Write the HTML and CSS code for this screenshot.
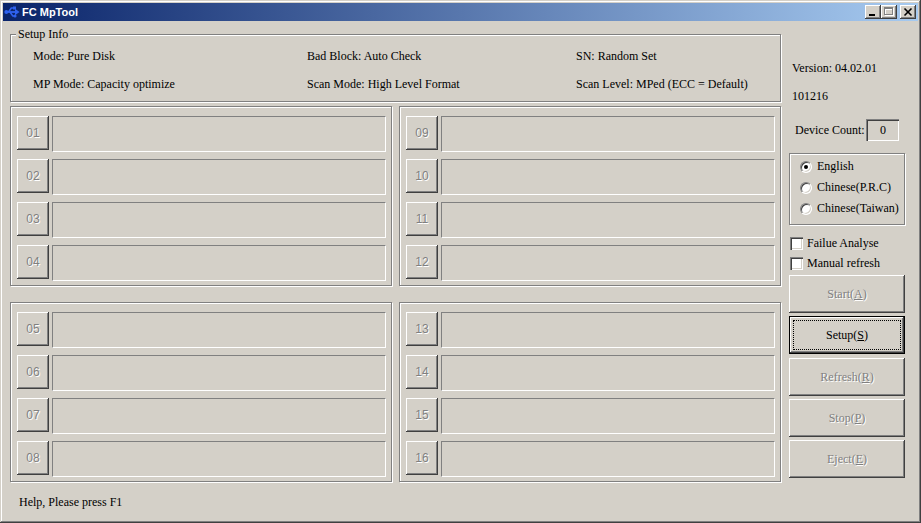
FILE: index.html
```html
<!DOCTYPE html>
<html>
<head>
<meta charset="utf-8">
<title>FC MpTool</title>
<link rel="stylesheet" href="styles.css">
</head>
<body>
<div class="window">
  <div class="titlebar">
    <svg class="app-icon" width="16" height="16" viewBox="0 0 16 16">
      <g fill="#2f62f0" stroke="#2f62f0">
        <circle cx="2.3" cy="8" r="2" stroke="none"/>
        <line x1="2" y1="8" x2="12" y2="8" stroke-width="1.8"/>
        <polygon points="11,4.8 15.5,8 11,11.2" stroke="none"/>
        <polyline points="4.5,8 7.3,4 9.5,4" fill="none" stroke-width="1.6"/>
        <rect x="9" y="2.5" width="3" height="3" stroke="none"/>
        <polyline points="6,8 8.8,12 10,12" fill="none" stroke-width="1.6"/>
        <circle cx="11" cy="12" r="1.6" stroke="none"/>
      </g>
    </svg>
    <span class="title">FC MpTool</span>
    <div class="caption-btns">
      <div class="cap">
        <svg width="16" height="14" viewBox="0 0 16 14" shape-rendering="crispEdges"><rect x="4" y="9" width="6" height="2" fill="#000"/></svg>
      </div>
      <div class="cap">
        <svg width="16" height="14" viewBox="0 0 16 14" shape-rendering="crispEdges">
          <g fill="none" stroke="#fff"><rect x="4.5" y="3.5" width="8" height="7"/><line x1="4" y1="4.5" x2="13" y2="4.5"/></g>
          <g fill="none" stroke="#808080"><rect x="3.5" y="2.5" width="8" height="7"/><line x1="3" y1="3.5" x2="12" y2="3.5"/></g>
        </svg>
      </div>
      <div class="cap cap-close">
        <svg width="16" height="14" viewBox="0 0 16 14"><g stroke="#000" stroke-width="1.6"><line x1="4.5" y1="3.5" x2="11.5" y2="10.5"/><line x1="11.5" y1="3.5" x2="4.5" y2="10.5"/></g></svg>
      </div>
    </div>
  </div>

  <div class="client">
    <div class="main">
      <div class="group setup">
        <span class="group-label">Setup Info</span>
        <span>Mode: Pure Disk</span>
        <span>Bad Block: Auto Check</span>
        <span>SN: Random Set</span>
        <span>MP Mode: Capacity optimize</span>
        <span>Scan Mode: High Level Format</span>
        <span>Scan Level: MPed (ECC = Default)</span>
      </div>

      <div class="ports">
        <div class="group port-group">
          <div class="port-row"><div class="port-btn">01</div><div class="port-field"></div></div>
          <div class="port-row"><div class="port-btn">02</div><div class="port-field"></div></div>
          <div class="port-row"><div class="port-btn">03</div><div class="port-field"></div></div>
          <div class="port-row"><div class="port-btn">04</div><div class="port-field"></div></div>
        </div>
        <div class="group port-group">
          <div class="port-row"><div class="port-btn">09</div><div class="port-field"></div></div>
          <div class="port-row"><div class="port-btn">10</div><div class="port-field"></div></div>
          <div class="port-row"><div class="port-btn">11</div><div class="port-field"></div></div>
          <div class="port-row"><div class="port-btn">12</div><div class="port-field"></div></div>
        </div>
        <div class="group port-group">
          <div class="port-row"><div class="port-btn">05</div><div class="port-field"></div></div>
          <div class="port-row"><div class="port-btn">06</div><div class="port-field"></div></div>
          <div class="port-row"><div class="port-btn">07</div><div class="port-field"></div></div>
          <div class="port-row"><div class="port-btn">08</div><div class="port-field"></div></div>
        </div>
        <div class="group port-group">
          <div class="port-row"><div class="port-btn">13</div><div class="port-field"></div></div>
          <div class="port-row"><div class="port-btn">14</div><div class="port-field"></div></div>
          <div class="port-row"><div class="port-btn">15</div><div class="port-field"></div></div>
          <div class="port-row"><div class="port-btn">16</div><div class="port-field"></div></div>
        </div>
      </div>

      <div class="status">Help, Please press F1</div>
    </div>

    <div class="side">
      <div class="ver">Version: 04.02.01</div>
      <div class="ver build">101216</div>
      <div class="device-row">
        <span class="device-label">Device Count:</span>
        <span class="device-box">0</span>
      </div>
      <div class="group lang-group">
        <div class="radio-row"><span class="radio checked"></span><span>English</span></div>
        <div class="radio-row"><span class="radio"></span><span>Chinese(P.R.C)</span></div>
        <div class="radio-row"><span class="radio"></span><span>Chinese(Taiwan)</span></div>
      </div>
      <div class="checks">
        <div class="check-row"><span class="checkbox"></span><span>Failue Analyse</span></div>
        <div class="check-row"><span class="checkbox"></span><span>Manual refresh</span></div>
      </div>
      <div class="buttons">
        <div class="btn disabled">Start(<u>A</u>)</div>
        <div class="btn default">Setup(<u>S</u>)</div>
        <div class="btn disabled btn-gap">Refresh(<u>R</u>)</div>
        <div class="btn disabled">Stop(<u>P</u>)</div>
        <div class="btn disabled">Eject(<u>E</u>)</div>
      </div>
    </div>
  </div>
</div>
</body>
</html>
```

FILE: styles.css
```css
* { box-sizing: border-box; }

body {
  margin: 0;
  background: #d4d0c8;
  font-family: "Liberation Serif", "Times New Roman", serif;
  font-size: 12px;
  color: #000;
}

.window {
  width: 921px;
  height: 523px;
  padding: 3px;
  background: #d4d0c8;
  box-shadow: inset -1px -1px #404040, inset 1px 1px #d4d0c8,
              inset -2px -2px #808080, inset 2px 2px #ffffff;
  display: flex;
  flex-direction: column;
}

.titlebar {
  height: 18px;
  background: linear-gradient(to right, #0a246a, #a6caf0);
  display: flex;
  align-items: center;
  padding: 0 2px 0 1px;
}

.app-icon { display: block; }

.title {
  color: #fff;
  font-family: "Liberation Sans", Arial, sans-serif;
  font-weight: bold;
  font-size: 11px;
  margin-left: 2px;
  line-height: 18px;
}

.caption-btns {
  margin-left: auto;
  display: flex;
}

.cap {
  width: 16px;
  height: 14px;
  background: #d4d0c8;
  box-shadow: inset -1px -1px #404040, inset 1px 1px #ffffff,
              inset -2px -2px #808080, inset 2px 2px #d4d0c8;
}
.cap svg { display: block; }
.cap-close { margin-left: 3px; }

.client {
  flex: 1;
  display: flex;
  padding-left: 7px;
}

.main {
  width: 771px;
  padding-top: 13px;
}

.group {
  position: relative;
  border: 1px solid #808080;
  box-shadow: inset 1px 1px #ffffff, 1px 1px #ffffff;
}

.group-label {
  position: absolute;
  top: -8px;
  left: 5px;
  padding: 0 2px;
  background: #d4d0c8;
  line-height: 14px;
}

.setup {
  height: 68px;
  padding: 14px 0 0 22px;
  display: grid;
  grid-template-columns: 274px 269px auto;
  grid-auto-rows: 14px;
  row-gap: 14px;
  line-height: 14px;
  white-space: nowrap;
}

.ports {
  margin-top: 4px;
  display: grid;
  grid-template-columns: 382px 382px;
  column-gap: 7px;
  row-gap: 16px;
}

.port-group {
  height: 180px;
  padding: 9px 5px 0 6px;
  display: flex;
  flex-direction: column;
  gap: 7px;
}

.port-row {
  display: flex;
  gap: 3px;
  height: 36px;
}

.port-btn {
  width: 32px;
  height: 34px;
  display: flex;
  align-items: center;
  justify-content: center;
  font-family: "Liberation Sans", Arial, sans-serif;
  font-size: 12px;
  color: #808080;
  text-shadow: 1px 1px 0 #ffffff;
  box-shadow: inset -1px -1px #404040, inset 1px 1px #ffffff,
              inset -2px -2px #808080, inset 2px 2px #d4d0c8;
}

.port-field {
  flex: 1;
  border-top: 1px solid #808080;
  border-left: 1px solid #808080;
  border-bottom: 1px solid #ffffff;
  border-right: 1px solid #ffffff;
}

.status {
  margin-top: 13px;
  padding-left: 9px;
  line-height: 14px;
}

.side {
  width: 116px;
  margin-left: 8px;
  padding-top: 40px;
  display: flex;
  flex-direction: column;
}

.ver {
  line-height: 14px;
  padding-left: 3px;
  white-space: nowrap;
}
.build { margin-top: 14px; }

.device-row {
  margin-top: 16px;
  height: 22px;
  display: flex;
  align-items: center;
  padding: 0 6px 0 6px;
}

.device-box {
  margin-left: auto;
  width: 33px;
  height: 22px;
  display: flex;
  align-items: center;
  justify-content: center;
  padding-left: 1px;
  box-shadow: inset 1px 1px #808080, inset 2px 2px #404040,
              inset -1px -1px #ffffff, inset -2px -2px #d4d0c8;
}

.lang-group {
  margin-top: 12px;
  height: 72px;
  padding: 2px 0 0 10px;
}

.radio-row {
  height: 21px;
  display: flex;
  align-items: center;
  gap: 5px;
  white-space: nowrap;
}

.radio {
  position: relative;
  width: 12px;
  height: 12px;
  border-radius: 50%;
  background: #fff;
  border: 1px solid;
  border-color: #808080 #ffffff #ffffff #808080;
  box-shadow: inset 1px 1px #404040, inset -1px -1px #d4d0c8;
}
.radio.checked::after {
  content: "";
  position: absolute;
  left: 3px;
  top: 3px;
  width: 4px;
  height: 4px;
  border-radius: 50%;
  background: #000;
}

.checks {
  margin-top: 8px;
  padding-left: 1px;
}

.check-row {
  height: 20px;
  display: flex;
  align-items: center;
  gap: 4px;
  white-space: nowrap;
}

.checkbox {
  width: 13px;
  height: 13px;
  background: #fff;
  box-shadow: inset 1px 1px #808080, inset 2px 2px #404040,
              inset -1px -1px #ffffff, inset -2px -2px #d4d0c8;
}

.buttons {
  margin-top: 2px;
  display: flex;
  flex-direction: column;
  gap: 3px;
}

.btn {
  position: relative;
  height: 38px;
  display: flex;
  align-items: center;
  justify-content: center;
  font-family: "Liberation Serif", "Times New Roman", serif;
  font-size: 12px;
  background: #d4d0c8;
  box-shadow: inset -1px -1px #404040, inset 1px 1px #ffffff,
              inset -2px -2px #808080, inset 2px 2px #d4d0c8;
}
.btn-gap { margin-top: 1px; }
.btn.disabled {
  color: #808080;
  text-shadow: 1px 1px 0 #ffffff;
}
.btn.default {
  border: 1px solid #000;
}
.btn.default::after {
  content: "";
  position: absolute;
  inset: 3px;
  border: 1px dotted #000;
}
```
